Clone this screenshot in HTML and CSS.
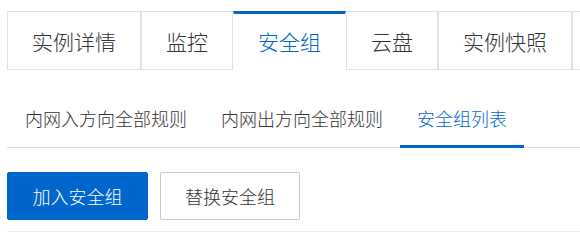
FILE: index.html
```html
<!DOCTYPE html>
<html lang="zh-CN">
<head>
<meta charset="utf-8">
<title>安全组</title>
<link rel="stylesheet" href="styles.css">
</head>
<body>
<div class="page">
  <div class="tabs">
    <div class="tab">实例详情</div>
    <div class="tab">监控</div>
    <div class="tab tab-active">安全组</div>
    <div class="tab">云盘</div>
    <div class="tab">实例快照</div>
    <div class="tab tab-more"></div>
  </div>
  <div class="subtabs">
    <div class="subtab">内网入方向全部规则</div>
    <div class="subtab">内网出方向全部规则</div>
    <div class="subtab subtab-active">安全组列表</div>
  </div>
  <div class="toolbar">
    <button class="btn btn-primary">加入安全组</button>
    <button class="btn btn-default">替换安全组</button>
  </div>
</div>
</body>
</html>
```
FILE: styles.css
```css
html, body {
  margin: 0;
  padding: 0;
  background: #ffffff;
  overflow: hidden;
}
body {
  font-family: "Noto Sans CJK SC", "Noto Sans", sans-serif;
  font-weight: 300;
  color: #333333;
}
.page {
  padding: 11px 0 0 7px;
}
.tabs {
  display: flex;
  overflow: hidden;
}
.tab {
  flex: none;
  box-sizing: border-box;
  height: 59px;
  padding: 2px 24px 0;
  border: 1px solid #e2e2e2;
  font-size: 21px;
  line-height: 55px;
  color: #333333;
  white-space: nowrap;
}
.tab-active {
  border-color: #0066cc transparent transparent;
  border-top-width: 3px;
  padding-top: 0;
  color: #0066cc;
}
.tab-more {
  width: 120px;
}
.subtabs {
  display: flex;
  margin-top: 21px;
  border-bottom: 1px solid #dcdcdc;
}
.subtab {
  box-sizing: border-box;
  height: 57px;
  margin-bottom: -1px;
  padding: 0 17px;
  border-bottom: 3px solid transparent;
  font-size: 18px;
  line-height: 54px;
  color: #333333;
}
.subtab:first-child {
  padding-left: 18px;
}
.subtab-active {
  border-bottom-color: #0066cc;
  color: #0066cc;
}
.toolbar {
  display: flex;
  gap: 12px;
  margin-top: 24px;
  padding-bottom: 11px;
  border-bottom: 1px solid #eeeeee;
}
.btn {
  box-sizing: border-box;
  height: 48px;
  width: 141px;
  padding: 0;
  border-radius: 2px;
  font-family: inherit;
  font-weight: 300;
  font-size: 18px;
  cursor: pointer;
}
.btn-primary {
  background: #0066cc;
  border: 1px solid #0066cc;
  color: #ffffff;
}
.btn-default {
  background: #ffffff;
  border: 1px solid #c6c9cf;
  color: #333333;
  width: 140px;
}
```
